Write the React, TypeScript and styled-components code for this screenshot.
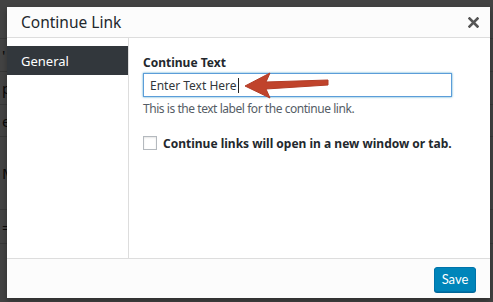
import styled, {createGlobalStyle} from 'styled-components'

const GlobalStyle = createGlobalStyle`
  html, body {
    margin: 0;
    padding: 0;
    width: 493px;
    height: 302px;
    overflow: hidden;
    background: #444;
    font-family: 'Noto Sans', 'Open Sans', sans-serif;
  }
`

const Page = styled.div`
  position: relative;
  width: 493px;
  height: 302px;
  background: #f1f1f1;
  overflow: hidden;
`

const BackRows = styled.div`
  display: flex;
  flex-direction: column;
  padding-top: 38px;
`

const BackRow = styled.div<{h: number}>`
  height: ${p => p.h}px;
  border-top: 1px solid #c9c9c9;
  font-size: 15px;
  color: #222;
  padding-left: 2px;
  line-height: ${p => p.h}px;
  box-sizing: border-box;
`

const Overlay = styled.div`
  position: absolute;
  inset: 0;
  background: rgba(0, 0, 0, 0.72);
`

const Modal = styled.div`
  position: absolute;
  left: 7px;
  top: 7px;
  width: 483px;
  height: 291px;
  background: #fff;
  display: flex;
  flex-direction: column;
  box-shadow: 0 3px 6px rgba(0, 0, 0, 0.3);
`

const Header = styled.header`
  height: 30px;
  flex: none;
  background: #fcfcfc;
  border-bottom: 1px solid #ddd;
  display: flex;
  align-items: center;
  justify-content: space-between;
  padding: 0 10px 0 14px;

  h1 {
    margin: 0;
    font-size: 15.5px;
    font-weight: 400;
    color: #23282d;
  }
`

const Close = styled.button`
  border: 0;
  background: none;
  padding: 0;
  width: 14px;
  height: 14px;
  display: grid;
  place-items: center;
`

const Body = styled.div`
  flex: 1;
  display: grid;
  grid-template-columns: 122px 1fr;
`

const Sidebar = styled.nav`
  border-right: 1px solid #ddd;
  padding-top: 8px;
`

const Tab = styled.div<{active?: boolean}>`
  height: 29px;
  display: flex;
  align-items: center;
  padding-left: 14px;
  font-size: 13px;
  color: ${p => (p.active ? '#fff' : '#0073aa')};
  background: ${p => (p.active ? '#32373c' : 'transparent')};
`

const Content = styled.div`
  padding: 16px 0 0 14px;
  display: flex;
  flex-direction: column;
`

const Label = styled.label`
  font-size: 12px;
  font-weight: 700;
  color: #23282d;
  line-height: 17px;
`

const InputRow = styled.div`
  position: relative;
  margin-top: 2px;
  width: 309px;
`

const TextBox = styled.div`
  height: 24px;
  box-sizing: border-box;
  border: 1px solid #5b9dd9;
  box-shadow: 0 0 2px rgba(30, 140, 190, 0.8);
  display: flex;
  align-items: center;
  padding-left: 6px;
  font-size: 12px;
  color: #32373c;
`

const Caret = styled.span`
  display: inline-block;
  width: 1px;
  height: 15px;
  background: #222;
  margin-left: 1px;
`

const Arrow = styled.svg`
  position: absolute;
  left: 95px;
  top: -4px;
`

const Help = styled.p`
  margin: 4px 0 0;
  font-size: 12px;
  letter-spacing: -0.45px;
  color: #555d66;
  line-height: 16px;
`

const CheckRow = styled.div`
  margin-top: 17px;
  display: flex;
  align-items: center;
  gap: 6px;
`

const Box = styled.span`
  width: 14px;
  height: 14px;
  box-sizing: border-box;
  border: 1px solid #b4b9be;
  box-shadow: inset 0 1px 2px rgba(0, 0, 0, 0.1);
  background: #fff;
`

const CheckLabel = styled.span`
  font-size: 12px;
  font-weight: 700;
  color: #23282d;
  margin-top: 1px;
`

const Footer = styled.footer`
  height: 39px;
  flex: none;
  background: #fcfcfc;
  border-top: 1px solid #ddd;
  display: flex;
  align-items: center;
  justify-content: flex-end;
  padding-right: 14px;
`

const SaveButton = styled.button`
  height: 25px;
  width: 42px;
  padding: 0;
  border: 1px solid #0073aa;
  border-radius: 3px;
  background: #0085ba;
  box-shadow: 0 1px 0 #006799;
  color: #fff;
  font-family: Lato, sans-serif;
  font-size: 13px;
  margin-top: 1px;
`

export default function App() {
  return (
    <>
      <GlobalStyle />
      <Page>
        <BackRows>
          <BackRow h={33}>'</BackRow>
          <BackRow h={33}>p</BackRow>
          <BackRow h={32}>e</BackRow>
          <BackRow h={73}>M</BackRow>
          <BackRow h={34}>=</BackRow>
          <BackRow h={60}></BackRow>
        </BackRows>
        <Overlay />
        <Modal>
          <Header>
            <h1>Continue Link</h1>
            <Close aria-label='Close'>
              <svg width='11' height='11' viewBox='0 0 11 11'>
                <path d='M1.5 1.5 L9.5 9.5 M9.5 1.5 L1.5 9.5' stroke='#555' strokeWidth='2.6' strokeLinecap='square' />
              </svg>
            </Close>
          </Header>
          <Body>
            <Sidebar>
              <Tab active>General</Tab>
            </Sidebar>
            <Content>
              <Label>Continue Text</Label>
              <InputRow>
                <TextBox>
                  Enter Text Here
                  <Caret />
                </TextBox>
                <Arrow width='92' height='32' viewBox='0 0 92 32'>
                  <path d='M7 17 L32 4 L28 13 L90 11 L90 16 L28 20 L32 29 Z' fill='#c0432b' stroke='#b23c26' strokeWidth='1' strokeLinejoin='round' />
                </Arrow>
              </InputRow>
              <Help>This is the text label for the continue link.</Help>
              <CheckRow>
                <Box />
                <CheckLabel>Continue links will open in a new window or tab.</CheckLabel>
              </CheckRow>
            </Content>
          </Body>
          <Footer>
            <SaveButton>Save</SaveButton>
          </Footer>
        </Modal>
      </Page>
    </>
  )
}
